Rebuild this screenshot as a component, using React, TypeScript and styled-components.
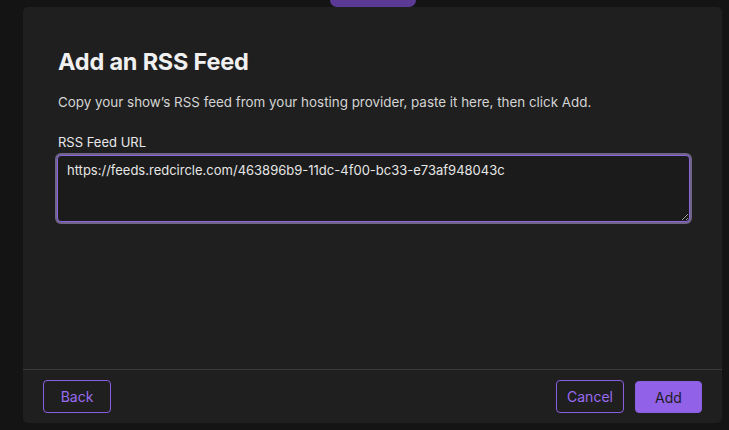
import { createGlobalStyle } from 'styled-components';
import styled from 'styled-components';

const GlobalStyle = createGlobalStyle`
  html, body {
    margin: 0;
    padding: 0;
    background: #141414;
    font-family: Inter, 'Noto Sans', sans-serif;
    -webkit-font-smoothing: antialiased;
  }
`;

const Page = styled.div`
  width: 729px;
  height: 430px;
  overflow: hidden;
  padding: 7px 7px 0 23px;
  box-sizing: border-box;
  position: relative;
`;

// purple tab peeking out behind the modal
const Tab = styled.div`
  position: absolute;
  top: -8px;
  left: 330px;
  width: 86px;
  height: 15px;
  border-radius: 7px;
  background: #5b3a96;
`;

const Modal = styled.div`
  position: relative;
  width: 699px;
  height: 416px;
  background: #1f1f1f;
  border-radius: 5px;
  display: flex;
  flex-direction: column;
`;

const Body = styled.div`
  flex: 1;
  padding: 41px 32px 0 35px;
`;

const Title = styled.h2`
  margin: 0;
  font-size: 23.5px;
  font-weight: 700;
  color: #f0f0f0;
  letter-spacing: -0.2px;
  line-height: 28px;
`;

const Description = styled.p`
  margin: 17px 0 0;
  font-size: 13.4px;
  line-height: 18px;
  color: #d4d4d4;
`;

const Label = styled.label`
  display: block;
  margin: 22px 0 0;
  font-size: 13px;
  line-height: 18px;
  color: #e8e8e8;
`;

const TextArea = styled.textarea`
  display: block;
  box-sizing: border-box;
  margin: 4px 0 0 -1px;
  width: 633px;
  height: 67px;
  padding: 5px 9px;
  resize: vertical;
  background: #1b1b1b;
  color: #e6e6e6;
  font-family: Inter, 'Noto Sans', sans-serif;
  font-size: 13px;
  line-height: 18px;
  border: 1px solid #8d64e0;
  border-radius: 4px;
  box-shadow: 0 0 0 2px #6e6485;
  outline: none;
`;

const Footer = styled.div`
  box-sizing: border-box;
  border-top: 1px solid #3a3a3a;
  padding: 10px 20px 0;
  height: 54px;
  display: flex;
  align-items: flex-start;
  gap: 11px;
`;

const Spacer = styled.div`
  flex: 1;
`;

const Button = styled.button<{ $primary?: boolean }>`
  padding: 0 10px;
  border-radius: 4px;
  font-family: Inter, 'Noto Sans', sans-serif;
  font-size: 14px;
  cursor: pointer;
  box-sizing: border-box;
  border: 1px solid #8a5ee0;
  background: ${(p) => (p.$primary ? '#9161e8' : 'transparent')};
  color: ${(p) => (p.$primary ? '#1c1c1c' : '#9a6cf0')};
  margin-top: ${(p) => (p.$primary ? '1px' : '0')};
  height: ${(p) => (p.$primary ? '32px' : '33px')};
  min-width: ${(p) => (p.$primary ? '67px' : '68px')};
`;

const App = () => {
  return (
    <>
      <GlobalStyle />
      <Page>
        <Tab />
        <Modal>
          <Body>
            <Title>Add an RSS Feed</Title>
            <Description>
              Copy your show’s RSS feed from your hosting provider, paste it here, then click Add.
            </Description>
            <Label htmlFor="rss">RSS Feed URL</Label>
            <TextArea
              id="rss"
              defaultValue="https://feeds.redcircle.com/463896b9-11dc-4f00-bc33-e73af948043c"
            />
          </Body>
          <Footer>
            <Button>Back</Button>
            <Spacer />
            <Button>Cancel</Button>
            <Button $primary>Add</Button>
          </Footer>
        </Modal>
      </Page>
    </>
  );
};

export default App;
